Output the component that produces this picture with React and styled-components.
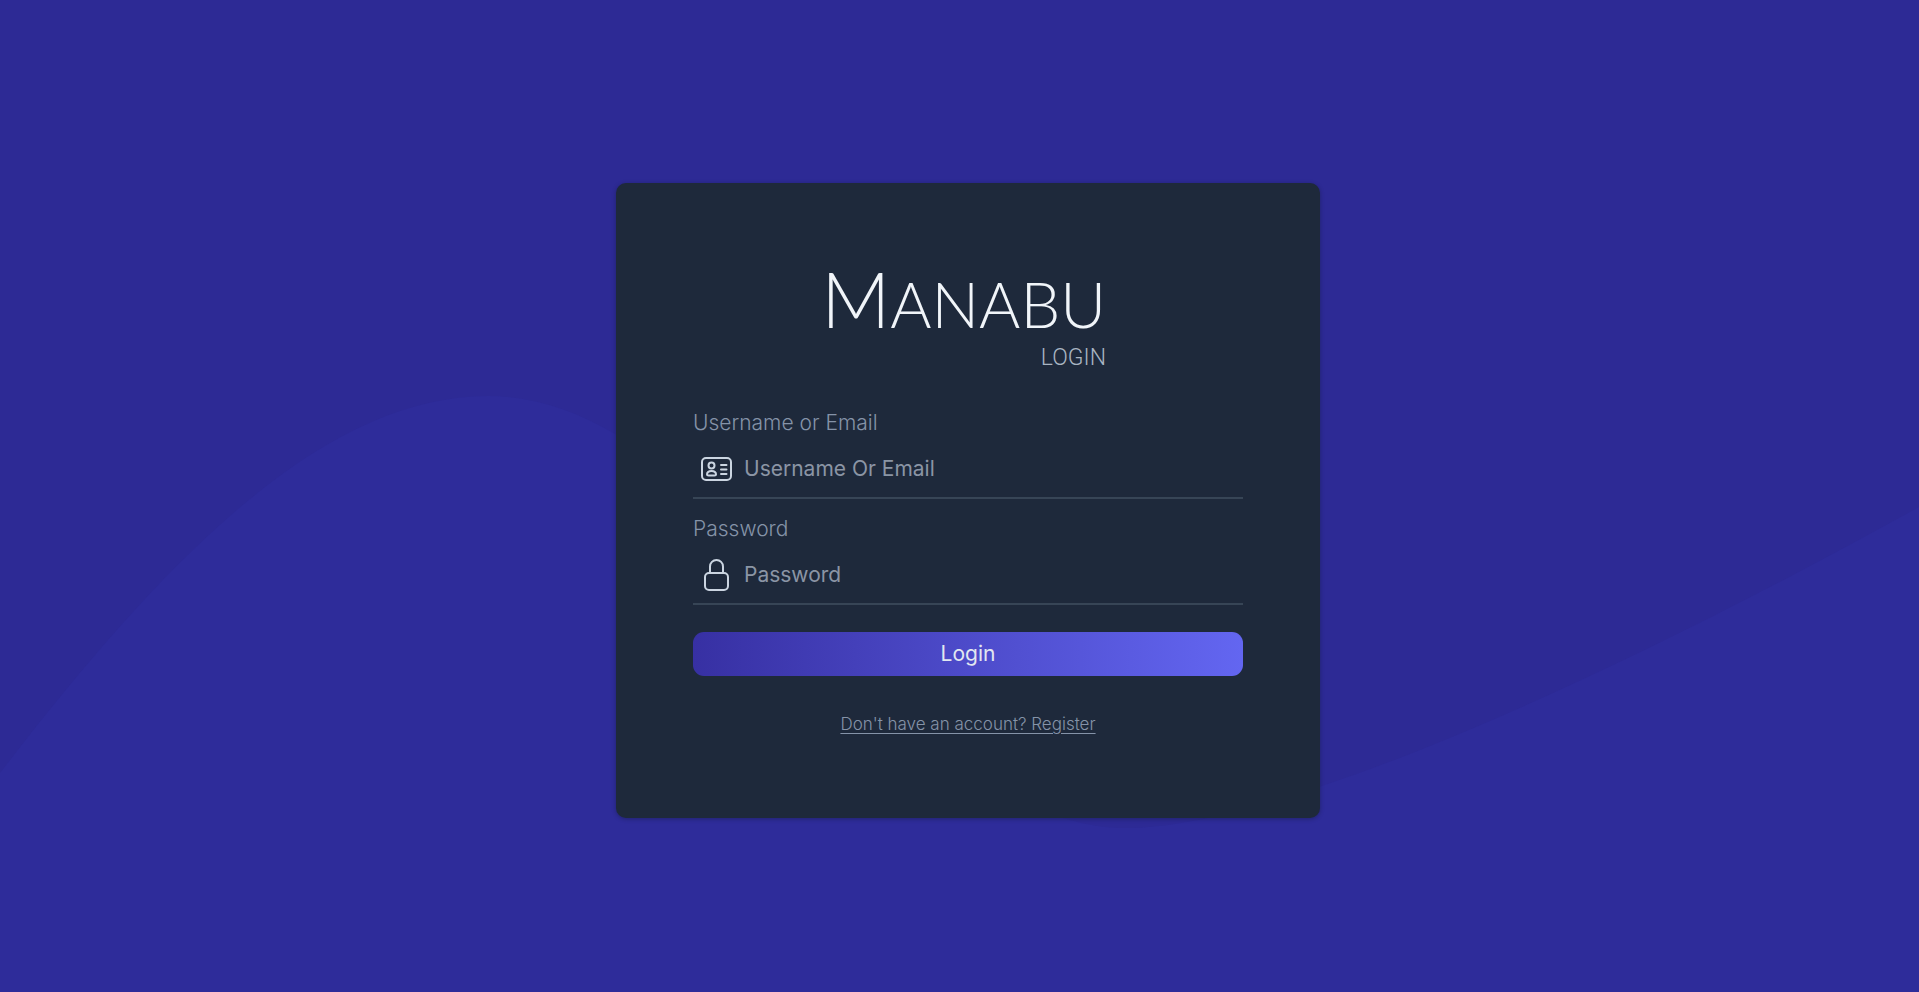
import React from 'react';
import styled, { createGlobalStyle } from 'styled-components';

const Global = createGlobalStyle`
  *, *::before, *::after { box-sizing: border-box; }
  body { margin: 0; background: #2d2a95; font-family: Inter, "Liberation Sans", sans-serif; }
`;

const Page = styled.main`
  position: relative;
  min-height: 100vh;
  display: flex;
  align-items: center;
  justify-content: center;
  padding: 9px 0 0 17px;
`;

const Wave = styled.svg`
  position: absolute;
  inset: 0;
  width: 100%;
  height: 100%;
`;

const Card = styled.section`
  position: relative;
  width: 100%;
  max-width: 704px;
  padding: 76px 77px 82px;
  border-radius: 10px;
  background: #1e293b;
  box-shadow: 0 1px 4px rgba(15, 23, 42, 0.4);
`;

const Brand = styled.header`
  width: 276px;
  margin: 0 auto;
  display: flex;
  flex-direction: column;
  align-items: flex-end;
`;

const Wordmark = styled.h1`
  margin: 0;
  font-family: Lato, sans-serif;
  font-size: 63px;
  font-weight: 300;
  line-height: 80px;
  white-space: nowrap;
  color: #f1f5f9;
  &::first-letter { font-size: 76px; }
`;

const Subtitle = styled.p`
  margin: 0;
  font-family: Roboto, sans-serif;
  font-size: 23px;
  font-weight: 300;
  line-height: 28px;
  color: #a9b4c2;
`;

const Form = styled.form`
  margin-top: 35px;
  display: flex;
  flex-direction: column;
`;

const Field = styled.div`
  height: 106px;
  display: flex;
  flex-direction: column;
`;

const Label = styled.label`
  font-size: 21px;
  font-weight: 300;
  line-height: 32px;
  color: #8593a8;
`;

const InputRow = styled.div`
  height: 60px;
  display: flex;
  align-items: center;
  gap: 10px;
  padding: 2px 5px 0;
  border-bottom: 2px solid #374556;
  color: #cbd5e1;
`;

const Input = styled.input`
  flex: 1;
  min-width: 0;
  padding: 0;
  border: 0;
  outline: 0;
  background: transparent;
  font: 400 21px/32px Inter, sans-serif;
  color: #e2e8f0;
  &::placeholder { color: #8b95a5; opacity: 1; }
`;

const LoginButton = styled.button`
  height: 44px;
  margin-top: 13px;
  border: 0;
  border-radius: 11px;
  background: linear-gradient(to right, #3730a3, #6366f1);
  font: 400 21px/32px Inter, sans-serif;
  color: #e2e8f0;
  cursor: pointer;
`;

const RegisterLink = styled.a`
  align-self: center;
  margin-top: 36px;
  font-size: 17px;
  font-weight: 300;
  line-height: 24px;
  color: #8593a8;
  text-underline-offset: 3px;
`;

const FieldIcon = ({ children }) => (
  <svg
    width="36"
    height="36"
    viewBox="0 0 36 36"
    fill="none"
    stroke="currentColor"
    strokeWidth="2"
    strokeLinecap="round"
    strokeLinejoin="round"
    aria-hidden="true"
  >
    {children}
  </svg>
);

const IdIcon = () => (
  <FieldIcon>
    <rect x="4" y="7" width="29" height="22" rx="4" />
    <circle cx="13.500" cy="14.500" r="3" />
    <path d="M9 23.500c0-2.200 2-3.500 4.500-3.500s4.500 1.300 4.500 3.500c0 .8-1 1-1.500 1h-6c-.5 0-1.500-.2-1.500-1z" />
    <path d="M23 14h5.500M23 18.500h5.500M23 23h5.500" />
  </FieldIcon>
);

const LockIcon = () => (
  <FieldIcon>
    <rect x="7" y="16" width="23" height="17" rx="4" />
    <path d="M12 16V9.500a6.500 6.500 0 0 1 13 0V16" />
  </FieldIcon>
);

export default function App() {
  return (
    <>
      <Global />
      <Page>
        <Wave viewBox="0 0 1919 992" preserveAspectRatio="none" aria-hidden="true">
          <path fill="#2e2c9a" d="M0 773C160 565 320 396 488 396C735 396 890 828 1126 828C1270 828 1580 695 1919 507V992H0Z" />
        </Wave>
        <Card>
          <Brand>
            <Wordmark>MANABU</Wordmark>
            <Subtitle>LOGIN</Subtitle>
          </Brand>
          <Form onSubmit={(e) => e.preventDefault()}>
            <Field>
              <Label htmlFor="username">Username or Email</Label>
              <InputRow>
                <IdIcon />
                <Input id="username" type="text" placeholder="Username Or Email" />
              </InputRow>
            </Field>
            <Field>
              <Label htmlFor="password">Password</Label>
              <InputRow>
                <LockIcon />
                <Input id="password" type="password" placeholder="Password" />
              </InputRow>
            </Field>
            <LoginButton type="submit">Login</LoginButton>
            <RegisterLink href="#register">Don't have an account? Register</RegisterLink>
          </Form>
        </Card>
      </Page>
    </>
  );
}
